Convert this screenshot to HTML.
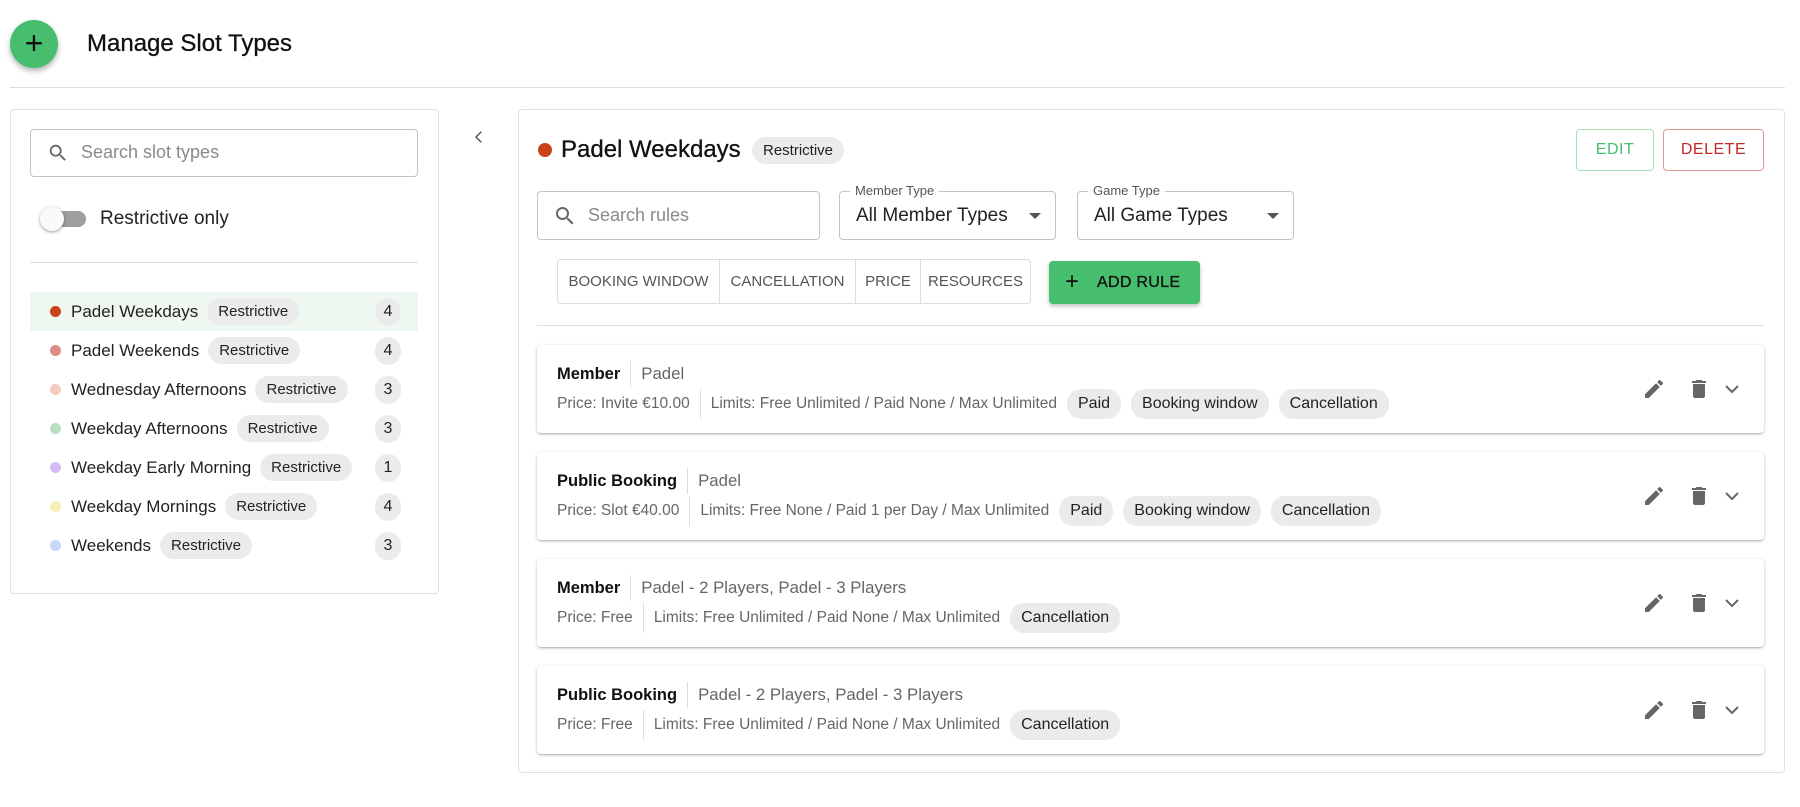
<!DOCTYPE html>
<html><head><meta charset="utf-8"><style>
*{box-sizing:border-box;margin:0;padding:0}
body{width:1800px;height:807px;background:#fff;font-family:"Liberation Sans",Arial,sans-serif;color:#222;position:relative;overflow:hidden}
.abs{position:absolute}
.fab{left:10px;top:20px;width:48px;height:48px;border-radius:50%;background:#47bd6e;box-shadow:0 3px 6px rgba(0,0,0,.3);color:#111;font-size:32px;line-height:46px;text-align:center}
.title{left:87px;top:30px;font-size:24px;color:#111;-webkit-text-stroke:.3px #111}
.hr{height:1px;background:#ddd}
.panel{border:1px solid #e0e0e0;border-radius:4px;background:#fff}
.input{border:1px solid #c4c4c4;border-radius:4px;background:#fff}
.ph{color:#8a8a8a;font-size:18px}
.row{position:absolute;left:30px;width:388px;height:39px;display:flex;align-items:center}
.dot{width:11px;height:11px;border-radius:50%;margin-left:20px;margin-right:10px;flex:none}
.rtxt{font-size:17px;color:#222;white-space:nowrap}
.chip{display:inline-block;background:#ebebeb;border-radius:14px;font-size:15px;color:#222;padding:5px 11px;white-space:nowrap}
.cnt{position:absolute;right:17px;width:26px;height:28px;border-radius:14px;background:#ebebeb;font-size:16px;text-align:center;line-height:28px}
.sel{position:absolute;border:1px solid #c4c4c4;border-radius:4px;height:49px}
.sel .lbl{position:absolute;top:-9px;left:10px;background:#fff;padding:0 5px;font-size:13px;color:#555}
.sel .val{position:absolute;left:16px;top:13px;font-size:19px;color:#222}
.sel .arr{position:absolute;right:14px;top:21px;width:0;height:0;border-left:6px solid transparent;border-right:6px solid transparent;border-top:6px solid #555}
.tabs{left:557px;top:259px;height:45px;border:1px solid #ddd;border-radius:4px;display:flex}
.tabs div{font-size:15px;color:#555;text-align:center;line-height:43px;border-right:1px solid #ddd;white-space:nowrap;overflow:hidden}
.tabs div:last-child{border-right:none}
.card{position:absolute;left:537px;width:1227px;height:88px;background:#fff;border-radius:4px;box-shadow:0 1px 3px rgba(0,0,0,.25),0 2px 1px -1px rgba(0,0,0,.12)}
.card .t{position:absolute;left:20px;top:16px;display:flex;align-items:center;white-space:nowrap}
.card .t b{font-weight:700;color:#111;font-size:16.5px;padding-right:10px;border-right:1px solid #ddd;margin-right:10px;line-height:26px}
.card .t span{color:#666;font-size:16.8px}
.card .m{position:absolute;left:20px;top:44px;height:30px;display:flex;align-items:center;font-size:15.5px;color:#666;white-space:nowrap}
.card .m span{line-height:30px}
.card .m .s{padding-right:10px;border-right:1px solid #ddd;margin-right:10px}
.card .m .chip{margin-right:10px;font-size:16px;line-height:20px}
.ic{position:absolute;top:32px}
</style></head><body>
<div class="abs fab">+</div>
<div class="abs title">Manage Slot Types</div>
<div class="abs hr" style="left:10px;top:87px;width:1775px"></div>

<div class="abs panel" style="left:10px;top:109px;width:429px;height:485px"></div>
<div class="abs input" style="left:30px;top:129px;width:388px;height:48px"></div>
<svg class="abs" style="left:47px;top:142px" width="22" height="22" viewBox="0 0 24 24"><path fill="#666" d="M15.5 14h-.79l-.28-.27A6.47 6.47 0 0 0 16 9.5 6.5 6.5 0 1 0 9.5 16c1.61 0 3.09-.59 4.23-1.57l.27.28v.79l5 4.99L20.49 19l-4.99-5zm-6 0C7.01 14 5 11.99 5 9.5S7.01 5 9.5 5 14 7.01 14 9.5 11.99 14 9.5 14z"/></svg>
<div class="abs ph" style="left:81px;top:142px">Search slot types</div>
<div class="abs" style="left:44px;top:211px;width:42px;height:16px;border-radius:8px;background:#9e9e9e"></div>
<div class="abs" style="left:40px;top:207px;width:24px;height:24px;border-radius:50%;background:#fafafa;box-shadow:0 1px 3px rgba(0,0,0,.4)"></div>
<div class="abs" style="left:100px;top:208px;font-size:19px">Restrictive only</div>
<div class="abs hr" style="left:30px;top:262px;width:388px"></div>

<div class="row" style="top:292px;background:#eef8f1"><span class="dot" style="background:#c9431a"></span><span class="rtxt">Padel Weekdays</span><span class="chip" style="margin-left:9px">Restrictive</span><span class="cnt">4</span></div>
<div class="row" style="top:331px"><span class="dot" style="background:#de8c86"></span><span class="rtxt">Padel Weekends</span><span class="chip" style="margin-left:9px">Restrictive</span><span class="cnt">4</span></div>
<div class="row" style="top:370px"><span class="dot" style="background:#f4cbbd"></span><span class="rtxt">Wednesday Afternoons</span><span class="chip" style="margin-left:9px">Restrictive</span><span class="cnt">3</span></div>
<div class="row" style="top:409px"><span class="dot" style="background:#b9dfbf"></span><span class="rtxt">Weekday Afternoons</span><span class="chip" style="margin-left:9px">Restrictive</span><span class="cnt">3</span></div>
<div class="row" style="top:448px"><span class="dot" style="background:#d3bcf4"></span><span class="rtxt">Weekday Early Morning</span><span class="chip" style="margin-left:9px">Restrictive</span><span class="cnt">1</span></div>
<div class="row" style="top:487px"><span class="dot" style="background:#f6f2b6"></span><span class="rtxt">Weekday Mornings</span><span class="chip" style="margin-left:9px">Restrictive</span><span class="cnt">4</span></div>
<div class="row" style="top:526px"><span class="dot" style="background:#c7d8f6"></span><span class="rtxt">Weekends</span><span class="chip" style="margin-left:9px">Restrictive</span><span class="cnt">3</span></div>

<svg class="abs" style="left:470px;top:128px" width="18" height="18" viewBox="0 0 24 24"><path d="M15 5l-7 7 7 7" fill="none" stroke="#555" stroke-width="2"/></svg>

<div class="abs panel" style="left:518px;top:109px;width:1267px;height:664px"></div>
<div class="abs" style="left:538px;top:143px;width:14px;height:14px;border-radius:50%;background:#c9431a"></div>
<div class="abs" style="left:561px;top:136px;font-size:24px;color:#111;-webkit-text-stroke:.3px #111">Padel Weekdays</div>
<div class="abs chip" style="left:752px;top:137px;padding:5px 11px">Restrictive</div>
<div class="abs" style="left:1576px;top:129px;width:78px;height:42px;border:1px solid #a8dfb8;border-radius:4px;color:#47bd6e;font-size:16px;text-align:center;line-height:40px;letter-spacing:.5px">EDIT</div>
<div class="abs" style="left:1663px;top:129px;width:101px;height:42px;border:1px solid #e09a9a;border-radius:4px;color:#c62828;font-size:16px;text-align:center;line-height:40px;letter-spacing:.5px">DELETE</div>

<div class="abs input" style="left:537px;top:191px;width:283px;height:49px"></div>
<svg class="abs" style="left:553px;top:204px" width="24" height="24" viewBox="0 0 24 24"><path fill="#666" d="M15.5 14h-.79l-.28-.27A6.47 6.47 0 0 0 16 9.5 6.5 6.5 0 1 0 9.5 16c1.61 0 3.09-.59 4.23-1.57l.27.28v.79l5 4.99L20.49 19l-4.99-5zm-6 0C7.01 14 5 11.99 5 9.5S7.01 5 9.5 5 14 7.01 14 9.5 11.99 14 9.5 14z"/></svg>
<div class="abs ph" style="left:588px;top:205px">Search rules</div>
<div class="sel" style="left:839px;top:191px;width:217px"><span class="lbl">Member Type</span><span class="val">All Member Types</span><span class="arr"></span></div>
<div class="sel" style="left:1077px;top:191px;width:217px"><span class="lbl">Game Type</span><span class="val">All Game Types</span><span class="arr"></span></div>

<div class="abs tabs"><div style="width:162px">BOOKING WINDOW</div><div style="width:136px">CANCELLATION</div><div style="width:65px">PRICE</div><div style="width:109px">RESOURCES</div></div>
<div class="abs" style="left:1049px;top:261px;width:151px;height:43px;background:#47bd6e;border-radius:4px;box-shadow:0 2px 4px rgba(0,0,0,.25);color:#111;font-size:16px;line-height:43px;letter-spacing:.3px"><span style="font-size:24px;position:absolute;left:16px;top:-1px">+</span><span style="position:absolute;left:48px;-webkit-text-stroke:.3px #111">ADD RULE</span></div>
<div class="abs hr" style="left:537px;top:325px;width:1227px"></div>

<div class="card" style="top:345px"><div class="t"><b>Member</b><span>Padel</span></div><div class="m"><span class="s">Price: Invite €10.00</span><span style="margin-right:10px">Limits: Free Unlimited / Paid None / Max Unlimited</span><span class="chip">Paid</span><span class="chip">Booking window</span><span class="chip">Cancellation</span></div>
<svg class="ic" style="left:1105px" width="24" height="24" viewBox="0 0 24 24"><path fill="#666" d="M3 17.25V21h3.75L17.81 9.94l-3.75-3.75L3 17.25zM20.71 7.04a1 1 0 0 0 0-1.41l-2.34-2.34a1 1 0 0 0-1.41 0l-1.83 1.83 3.75 3.75 1.83-1.83z"/></svg>
<svg class="ic" style="left:1150px" width="24" height="24" viewBox="0 0 24 24"><path fill="#666" d="M6 19c0 1.1.9 2 2 2h8c1.1 0 2-.9 2-2V7H6v12zM19 4h-3.5l-1-1h-5l-1 1H5v2h14V4z"/></svg>
<svg class="ic" style="left:1183px" width="24" height="24" viewBox="0 0 24 24"><path d="M6 9l6 6 6-6" fill="none" stroke="#666" stroke-width="2"/></svg></div>

<div class="card" style="top:452px"><div class="t"><b>Public Booking</b><span>Padel</span></div><div class="m"><span class="s">Price: Slot €40.00</span><span style="margin-right:10px">Limits: Free None / Paid 1 per Day / Max Unlimited</span><span class="chip">Paid</span><span class="chip">Booking window</span><span class="chip">Cancellation</span></div>
<svg class="ic" style="left:1105px" width="24" height="24" viewBox="0 0 24 24"><path fill="#666" d="M3 17.25V21h3.75L17.81 9.94l-3.75-3.75L3 17.25zM20.71 7.04a1 1 0 0 0 0-1.41l-2.34-2.34a1 1 0 0 0-1.41 0l-1.83 1.83 3.75 3.75 1.83-1.83z"/></svg>
<svg class="ic" style="left:1150px" width="24" height="24" viewBox="0 0 24 24"><path fill="#666" d="M6 19c0 1.1.9 2 2 2h8c1.1 0 2-.9 2-2V7H6v12zM19 4h-3.5l-1-1h-5l-1 1H5v2h14V4z"/></svg>
<svg class="ic" style="left:1183px" width="24" height="24" viewBox="0 0 24 24"><path d="M6 9l6 6 6-6" fill="none" stroke="#666" stroke-width="2"/></svg></div>

<div class="card" style="top:559px"><div class="t"><b>Member</b><span>Padel - 2 Players, Padel - 3 Players</span></div><div class="m"><span class="s">Price: Free</span><span style="margin-right:10px">Limits: Free Unlimited / Paid None / Max Unlimited</span><span class="chip">Cancellation</span></div>
<svg class="ic" style="left:1105px" width="24" height="24" viewBox="0 0 24 24"><path fill="#666" d="M3 17.25V21h3.75L17.81 9.94l-3.75-3.75L3 17.25zM20.71 7.04a1 1 0 0 0 0-1.41l-2.34-2.34a1 1 0 0 0-1.41 0l-1.83 1.83 3.75 3.75 1.83-1.83z"/></svg>
<svg class="ic" style="left:1150px" width="24" height="24" viewBox="0 0 24 24"><path fill="#666" d="M6 19c0 1.1.9 2 2 2h8c1.1 0 2-.9 2-2V7H6v12zM19 4h-3.5l-1-1h-5l-1 1H5v2h14V4z"/></svg>
<svg class="ic" style="left:1183px" width="24" height="24" viewBox="0 0 24 24"><path d="M6 9l6 6 6-6" fill="none" stroke="#666" stroke-width="2"/></svg></div>

<div class="card" style="top:666px"><div class="t"><b>Public Booking</b><span>Padel - 2 Players, Padel - 3 Players</span></div><div class="m"><span class="s">Price: Free</span><span style="margin-right:10px">Limits: Free Unlimited / Paid None / Max Unlimited</span><span class="chip">Cancellation</span></div>
<svg class="ic" style="left:1105px" width="24" height="24" viewBox="0 0 24 24"><path fill="#666" d="M3 17.25V21h3.75L17.81 9.94l-3.75-3.75L3 17.25zM20.71 7.04a1 1 0 0 0 0-1.41l-2.34-2.34a1 1 0 0 0-1.41 0l-1.83 1.83 3.75 3.75 1.83-1.83z"/></svg>
<svg class="ic" style="left:1150px" width="24" height="24" viewBox="0 0 24 24"><path fill="#666" d="M6 19c0 1.1.9 2 2 2h8c1.1 0 2-.9 2-2V7H6v12zM19 4h-3.5l-1-1h-5l-1 1H5v2h14V4z"/></svg>
<svg class="ic" style="left:1183px" width="24" height="24" viewBox="0 0 24 24"><path d="M6 9l6 6 6-6" fill="none" stroke="#666" stroke-width="2"/></svg></div>
</body></html>
